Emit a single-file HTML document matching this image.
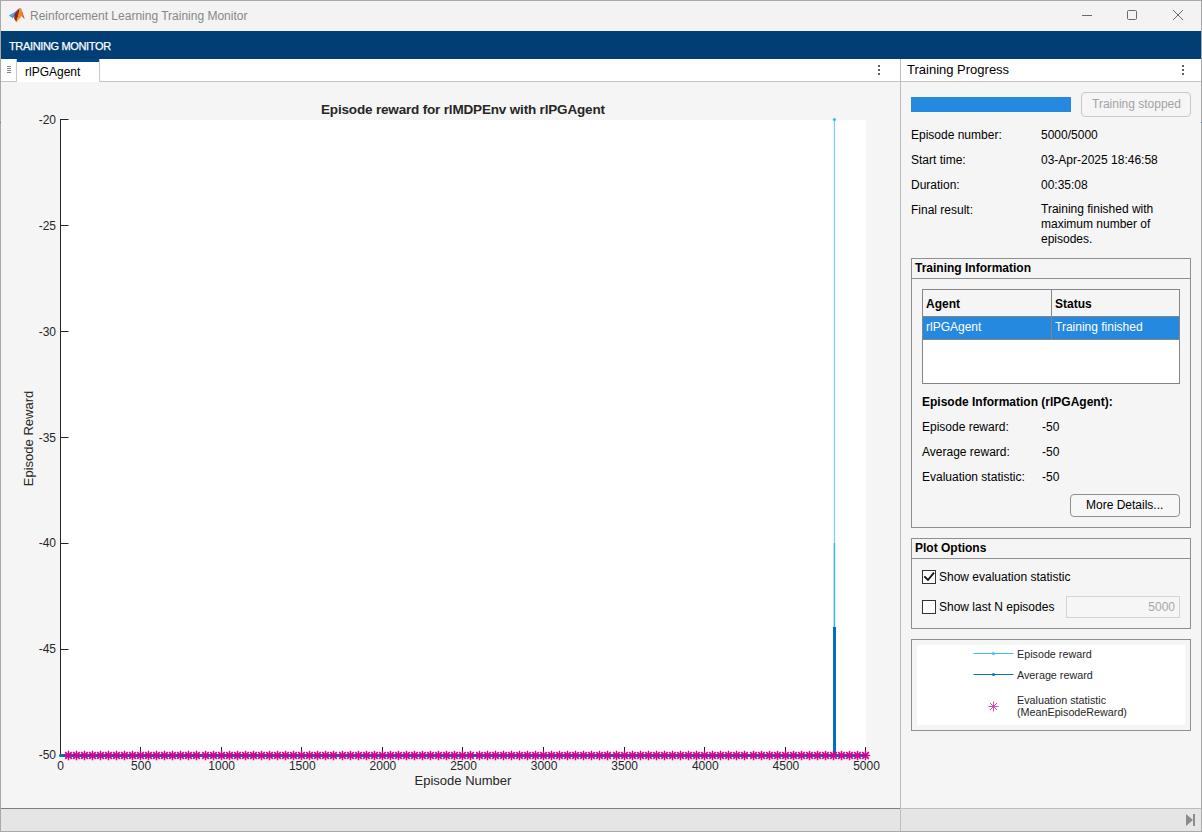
<!DOCTYPE html>
<html><head><meta charset="utf-8">
<style>
*{margin:0;padding:0;box-sizing:border-box}
html,body{width:1202px;height:832px;overflow:hidden;background:#f3f3f3;font-family:"Liberation Sans",sans-serif;color:#000}
.a{position:absolute}
#win{position:absolute;left:0;top:0;width:1202px;height:832px;border:1px solid #a8a8a8;background:#f3f3f3}
.t12{font-size:12px;line-height:14px;white-space:nowrap}
</style></head><body>
<div id="win"></div>
<div class="a" style="left:0;top:122px;width:1px;height:1px;background:#3d7cc4"></div>
<div class="a" style="left:1201px;top:122px;width:1px;height:1px;background:#3d7cc4"></div>
<!-- title bar -->
<div class="a" style="left:1px;top:1px;width:1200px;height:30px;background:#f3f3f3"></div>
<svg class="a" style="left:6px;top:4px" width="22" height="22" viewBox="0 0 22 22">
  <path d="M3 11.4 L8.5 8.3 L13.6 4 L12.2 8.6 L9.2 11.6 L6.8 14.2 Z" fill="#3b97e0"/>
  <path d="M3 11.4 L8.5 8.3 L9.5 9.5 L6 12.5 Z" fill="#52aaea"/>
  <path d="M8.3 10.2 L13.6 4 L12.6 11 L10.4 18.2 L8.2 14.6 Z" fill="#9c2614"/>
  <path d="M13.6 4 L15.2 4.6 L16.4 11.2 L10.4 18.2 L12.4 11 Z" fill="#ee8a26"/>
  <path d="M15.2 4.6 L18.8 15.2 L16.2 12.6 L16.4 11.2 Z" fill="#cf4418"/>
  <path d="M11.2 14.5 L14.5 13 L10.4 18.2 Z" fill="#f6b62c"/>
</svg>
<div class="a t12" style="left:30px;top:9px;color:#878787;font-size:12px">Reinforcement Learning Training Monitor</div>
<!-- window controls -->
<div class="a" style="left:1082px;top:15px;width:10px;height:1px;background:#6a6a6a"></div>
<div class="a" style="left:1127px;top:10px;width:10px;height:10px;border:1px solid #6a6a6a;border-radius:1.5px"></div>
<svg class="a" style="left:1173px;top:10px" width="10" height="10" viewBox="0 0 10 10"><path d="M0 0 L10 10 M10 0 L0 10" stroke="#6a6a6a" stroke-width="1"/></svg>
<!-- blue toolstrip -->
<div class="a" style="left:1px;top:31px;width:1200px;height:28px;background:#003e74"></div>
<div class="a" style="left:9px;top:40px;color:#fff;font-size:11px;line-height:13px;letter-spacing:-0.35px;-webkit-text-stroke:0.25px #fff;white-space:nowrap">TRAINING MONITOR</div>

<!-- left document tab strip -->
<div class="a" style="left:1px;top:59px;width:899px;height:23px;background:#fff;border-bottom:1px solid #c4c4c4"></div>
<div class="a" style="left:1px;top:59px;width:16px;height:23px;border-right:1px solid #c8c8c8;border-bottom:1px solid #c4c4c4;background:#fff"></div>
<div class="a" style="left:7px;top:66px;width:4px;height:1px;background:#777;box-shadow:0 2px 0 #888,0 4px 0 #888,0 6px 0 #888;background:#888"></div>
<div class="a" style="left:17px;top:59px;width:83px;height:23px;background:#fff;border-right:1px solid #c8c8c8"></div>
<div class="a" style="left:17px;top:59px;width:82px;height:3px;background:#02478a"></div>
<div class="a t12" style="left:25px;top:65px;color:#000">rlPGAgent</div>
<div class="a" style="left:878px;top:65px;width:2px;height:2px;background:#606060;box-shadow:0 4px 0 #606060,0 8px 0 #606060"></div>

<!-- left plot region -->
<div class="a" style="left:1px;top:82px;width:899px;height:726px;background:#f5f5f5"></div>
<svg class="a" style="left:0;top:0" width="900" height="808" id="plot">
<rect x="61" y="120" width="805" height="636" fill="#fff"/>
<path d="M60.5 119 V756 M60 755.5 H866" stroke="#262626" stroke-width="1" fill="none"/>
<path d="M61 119.5 H68.5 M61 225.5 H68.5 M61 331.5 H68.5 M61 437.5 H68.5 M61 543.5 H68.5 M61 649.5 H68.5 M140.5 755 V747 M221.5 755 V747 M301.5 755 V747 M382.5 755 V747 M462.5 755 V747 M543.5 755 V747 M624.5 755 V747 M704.5 755 V747 M785.5 755 V747 M865.5 755 V747" stroke="#262626" stroke-width="1" fill="none"/>
<text x="56" y="124.0" text-anchor="end" font-size="12" fill="#262626">-20</text>
<text x="56" y="230.0" text-anchor="end" font-size="12" fill="#262626">-25</text>
<text x="56" y="336.0" text-anchor="end" font-size="12" fill="#262626">-30</text>
<text x="56" y="442.0" text-anchor="end" font-size="12" fill="#262626">-35</text>
<text x="56" y="547.0" text-anchor="end" font-size="12" fill="#262626">-40</text>
<text x="56" y="653.0" text-anchor="end" font-size="12" fill="#262626">-45</text>
<text x="56" y="759.0" text-anchor="end" font-size="12" fill="#262626">-50</text>
<text x="60.5" y="770" text-anchor="middle" font-size="12" fill="#262626">0</text>
<text x="141.1" y="770" text-anchor="middle" font-size="12" fill="#262626">500</text>
<text x="221.7" y="770" text-anchor="middle" font-size="12" fill="#262626">1000</text>
<text x="302.3" y="770" text-anchor="middle" font-size="12" fill="#262626">1500</text>
<text x="382.9" y="770" text-anchor="middle" font-size="12" fill="#262626">2000</text>
<text x="463.5" y="770" text-anchor="middle" font-size="12" fill="#262626">2500</text>
<text x="544.1" y="770" text-anchor="middle" font-size="12" fill="#262626">3000</text>
<text x="624.7" y="770" text-anchor="middle" font-size="12" fill="#262626">3500</text>
<text x="705.3" y="770" text-anchor="middle" font-size="12" fill="#262626">4000</text>
<text x="785.9" y="770" text-anchor="middle" font-size="12" fill="#262626">4500</text>
<text x="866.5" y="770" text-anchor="middle" font-size="12" fill="#262626">5000</text>
<text x="463" y="785" text-anchor="middle" font-size="13" fill="#262626">Episode Number</text>
<text transform="translate(32.5 438.5) rotate(-90)" text-anchor="middle" font-size="13" fill="#262626">Episode Reward</text>
<text x="321" y="113.5" font-size="13.5" font-weight="bold" fill="#262626" textLength="284" lengthAdjust="spacing">Episode reward for rlMDPEnv with rlPGAgent</text>
<path d="M60.5 755.5 H866" stroke="#38bdf0" stroke-width="1.2" fill="none"/>
<path d="M834.4 543 V119.5" stroke="#38bdf0" stroke-opacity="0.75" stroke-width="1.1" fill="none"/>
<path d="M834.4 755.5 V543" stroke="#30b8ee" stroke-width="1.5" fill="none"/>
<circle cx="834.4" cy="119.5" r="1.6" fill="#38bdf0"/>
<path d="M60.5 755.5 H866" stroke="#0072bd" stroke-width="3" stroke-linecap="round" fill="none"/><path d="M834.5 755.5 V627" stroke="#0072bd" stroke-width="3" fill="none"/>
<path d="M64.56 755.5 H866" stroke="#d4008f" stroke-width="1" fill="none"/>
<path d="M68.50 750.80 V760.20 M63.80 755.50 H73.20 M76.50 750.80 V760.20 M71.80 755.50 H81.20 M84.50 750.80 V760.20 M79.80 755.50 H89.20 M92.50 750.80 V760.20 M87.80 755.50 H97.20 M100.50 750.80 V760.20 M95.80 755.50 H105.20 M108.50 750.80 V760.20 M103.80 755.50 H113.20 M116.50 750.80 V760.20 M111.80 755.50 H121.20 M124.50 750.80 V760.20 M119.80 755.50 H129.20 M132.50 750.80 V760.20 M127.80 755.50 H137.20 M140.50 750.80 V760.20 M135.80 755.50 H145.20 M148.50 750.80 V760.20 M143.80 755.50 H153.20 M156.50 750.80 V760.20 M151.80 755.50 H161.20 M164.50 750.80 V760.20 M159.80 755.50 H169.20 M172.50 750.80 V760.20 M167.80 755.50 H177.20 M180.50 750.80 V760.20 M175.80 755.50 H185.20 M188.50 750.80 V760.20 M183.80 755.50 H193.20 M196.50 750.80 V760.20 M191.80 755.50 H201.20 M205.50 750.80 V760.20 M200.80 755.50 H210.20 M213.50 750.80 V760.20 M208.80 755.50 H218.20 M221.50 750.80 V760.20 M216.80 755.50 H226.20 M229.50 750.80 V760.20 M224.80 755.50 H234.20 M237.50 750.80 V760.20 M232.80 755.50 H242.20 M245.50 750.80 V760.20 M240.80 755.50 H250.20 M253.50 750.80 V760.20 M248.80 755.50 H258.20 M261.50 750.80 V760.20 M256.80 755.50 H266.20 M269.50 750.80 V760.20 M264.80 755.50 H274.20 M277.50 750.80 V760.20 M272.80 755.50 H282.20 M285.50 750.80 V760.20 M280.80 755.50 H290.20 M293.50 750.80 V760.20 M288.80 755.50 H298.20 M301.50 750.80 V760.20 M296.80 755.50 H306.20 M309.50 750.80 V760.20 M304.80 755.50 H314.20 M317.50 750.80 V760.20 M312.80 755.50 H322.20 M325.50 750.80 V760.20 M320.80 755.50 H330.20 M333.50 750.80 V760.20 M328.80 755.50 H338.20 M342.50 750.80 V760.20 M337.80 755.50 H347.20 M350.50 750.80 V760.20 M345.80 755.50 H355.20 M358.50 750.80 V760.20 M353.80 755.50 H363.20 M366.50 750.80 V760.20 M361.80 755.50 H371.20 M374.50 750.80 V760.20 M369.80 755.50 H379.20 M382.50 750.80 V760.20 M377.80 755.50 H387.20 M390.50 750.80 V760.20 M385.80 755.50 H395.20 M398.50 750.80 V760.20 M393.80 755.50 H403.20 M406.50 750.80 V760.20 M401.80 755.50 H411.20 M414.50 750.80 V760.20 M409.80 755.50 H419.20 M422.50 750.80 V760.20 M417.80 755.50 H427.20 M430.50 750.80 V760.20 M425.80 755.50 H435.20 M438.50 750.80 V760.20 M433.80 755.50 H443.20 M446.50 750.80 V760.20 M441.80 755.50 H451.20 M454.50 750.80 V760.20 M449.80 755.50 H459.20 M462.50 750.80 V760.20 M457.80 755.50 H467.20 M470.50 750.80 V760.20 M465.80 755.50 H475.20 M479.50 750.80 V760.20 M474.80 755.50 H484.20 M487.50 750.80 V760.20 M482.80 755.50 H492.20 M495.50 750.80 V760.20 M490.80 755.50 H500.20 M503.50 750.80 V760.20 M498.80 755.50 H508.20 M511.50 750.80 V760.20 M506.80 755.50 H516.20 M519.50 750.80 V760.20 M514.80 755.50 H524.20 M527.50 750.80 V760.20 M522.80 755.50 H532.20 M535.50 750.80 V760.20 M530.80 755.50 H540.20 M543.50 750.80 V760.20 M538.80 755.50 H548.20 M551.50 750.80 V760.20 M546.80 755.50 H556.20 M559.50 750.80 V760.20 M554.80 755.50 H564.20 M567.50 750.80 V760.20 M562.80 755.50 H572.20 M575.50 750.80 V760.20 M570.80 755.50 H580.20 M583.50 750.80 V760.20 M578.80 755.50 H588.20 M591.50 750.80 V760.20 M586.80 755.50 H596.20 M599.50 750.80 V760.20 M594.80 755.50 H604.20 M607.50 750.80 V760.20 M602.80 755.50 H612.20 M616.50 750.80 V760.20 M611.80 755.50 H621.20 M624.50 750.80 V760.20 M619.80 755.50 H629.20 M632.50 750.80 V760.20 M627.80 755.50 H637.20 M640.50 750.80 V760.20 M635.80 755.50 H645.20 M648.50 750.80 V760.20 M643.80 755.50 H653.20 M656.50 750.80 V760.20 M651.80 755.50 H661.20 M664.50 750.80 V760.20 M659.80 755.50 H669.20 M672.50 750.80 V760.20 M667.80 755.50 H677.20 M680.50 750.80 V760.20 M675.80 755.50 H685.20 M688.50 750.80 V760.20 M683.80 755.50 H693.20 M696.50 750.80 V760.20 M691.80 755.50 H701.20 M704.50 750.80 V760.20 M699.80 755.50 H709.20 M712.50 750.80 V760.20 M707.80 755.50 H717.20 M720.50 750.80 V760.20 M715.80 755.50 H725.20 M728.50 750.80 V760.20 M723.80 755.50 H733.20 M736.50 750.80 V760.20 M731.80 755.50 H741.20 M744.50 750.80 V760.20 M739.80 755.50 H749.20 M753.50 750.80 V760.20 M748.80 755.50 H758.20 M761.50 750.80 V760.20 M756.80 755.50 H766.20 M769.50 750.80 V760.20 M764.80 755.50 H774.20 M777.50 750.80 V760.20 M772.80 755.50 H782.20 M785.50 750.80 V760.20 M780.80 755.50 H790.20 M793.50 750.80 V760.20 M788.80 755.50 H798.20 M801.50 750.80 V760.20 M796.80 755.50 H806.20 M809.50 750.80 V760.20 M804.80 755.50 H814.20 M817.50 750.80 V760.20 M812.80 755.50 H822.20 M825.50 750.80 V760.20 M820.80 755.50 H830.20 M833.50 750.80 V760.20 M828.80 755.50 H838.20 M841.50 750.80 V760.20 M836.80 755.50 H846.20 M849.50 750.80 V760.20 M844.80 755.50 H854.20 M857.50 750.80 V760.20 M852.80 755.50 H862.20 M865.50 750.80 V760.20 M860.80 755.50 H870.20" stroke="#d4008f" stroke-width="1.5" fill="none"/>
<path d="M65.20 752.20 L71.80 758.80 M65.20 758.80 L71.80 752.20 M73.20 752.20 L79.80 758.80 M73.20 758.80 L79.80 752.20 M81.20 752.20 L87.80 758.80 M81.20 758.80 L87.80 752.20 M89.20 752.20 L95.80 758.80 M89.20 758.80 L95.80 752.20 M97.20 752.20 L103.80 758.80 M97.20 758.80 L103.80 752.20 M105.20 752.20 L111.80 758.80 M105.20 758.80 L111.80 752.20 M113.20 752.20 L119.80 758.80 M113.20 758.80 L119.80 752.20 M121.20 752.20 L127.80 758.80 M121.20 758.80 L127.80 752.20 M129.20 752.20 L135.80 758.80 M129.20 758.80 L135.80 752.20 M137.20 752.20 L143.80 758.80 M137.20 758.80 L143.80 752.20 M145.20 752.20 L151.80 758.80 M145.20 758.80 L151.80 752.20 M153.20 752.20 L159.80 758.80 M153.20 758.80 L159.80 752.20 M161.20 752.20 L167.80 758.80 M161.20 758.80 L167.80 752.20 M169.20 752.20 L175.80 758.80 M169.20 758.80 L175.80 752.20 M177.20 752.20 L183.80 758.80 M177.20 758.80 L183.80 752.20 M185.20 752.20 L191.80 758.80 M185.20 758.80 L191.80 752.20 M193.20 752.20 L199.80 758.80 M193.20 758.80 L199.80 752.20 M202.20 752.20 L208.80 758.80 M202.20 758.80 L208.80 752.20 M210.20 752.20 L216.80 758.80 M210.20 758.80 L216.80 752.20 M218.20 752.20 L224.80 758.80 M218.20 758.80 L224.80 752.20 M226.20 752.20 L232.80 758.80 M226.20 758.80 L232.80 752.20 M234.20 752.20 L240.80 758.80 M234.20 758.80 L240.80 752.20 M242.20 752.20 L248.80 758.80 M242.20 758.80 L248.80 752.20 M250.20 752.20 L256.80 758.80 M250.20 758.80 L256.80 752.20 M258.20 752.20 L264.80 758.80 M258.20 758.80 L264.80 752.20 M266.20 752.20 L272.80 758.80 M266.20 758.80 L272.80 752.20 M274.20 752.20 L280.80 758.80 M274.20 758.80 L280.80 752.20 M282.20 752.20 L288.80 758.80 M282.20 758.80 L288.80 752.20 M290.20 752.20 L296.80 758.80 M290.20 758.80 L296.80 752.20 M298.20 752.20 L304.80 758.80 M298.20 758.80 L304.80 752.20 M306.20 752.20 L312.80 758.80 M306.20 758.80 L312.80 752.20 M314.20 752.20 L320.80 758.80 M314.20 758.80 L320.80 752.20 M322.20 752.20 L328.80 758.80 M322.20 758.80 L328.80 752.20 M330.20 752.20 L336.80 758.80 M330.20 758.80 L336.80 752.20 M339.20 752.20 L345.80 758.80 M339.20 758.80 L345.80 752.20 M347.20 752.20 L353.80 758.80 M347.20 758.80 L353.80 752.20 M355.20 752.20 L361.80 758.80 M355.20 758.80 L361.80 752.20 M363.20 752.20 L369.80 758.80 M363.20 758.80 L369.80 752.20 M371.20 752.20 L377.80 758.80 M371.20 758.80 L377.80 752.20 M379.20 752.20 L385.80 758.80 M379.20 758.80 L385.80 752.20 M387.20 752.20 L393.80 758.80 M387.20 758.80 L393.80 752.20 M395.20 752.20 L401.80 758.80 M395.20 758.80 L401.80 752.20 M403.20 752.20 L409.80 758.80 M403.20 758.80 L409.80 752.20 M411.20 752.20 L417.80 758.80 M411.20 758.80 L417.80 752.20 M419.20 752.20 L425.80 758.80 M419.20 758.80 L425.80 752.20 M427.20 752.20 L433.80 758.80 M427.20 758.80 L433.80 752.20 M435.20 752.20 L441.80 758.80 M435.20 758.80 L441.80 752.20 M443.20 752.20 L449.80 758.80 M443.20 758.80 L449.80 752.20 M451.20 752.20 L457.80 758.80 M451.20 758.80 L457.80 752.20 M459.20 752.20 L465.80 758.80 M459.20 758.80 L465.80 752.20 M467.20 752.20 L473.80 758.80 M467.20 758.80 L473.80 752.20 M476.20 752.20 L482.80 758.80 M476.20 758.80 L482.80 752.20 M484.20 752.20 L490.80 758.80 M484.20 758.80 L490.80 752.20 M492.20 752.20 L498.80 758.80 M492.20 758.80 L498.80 752.20 M500.20 752.20 L506.80 758.80 M500.20 758.80 L506.80 752.20 M508.20 752.20 L514.80 758.80 M508.20 758.80 L514.80 752.20 M516.20 752.20 L522.80 758.80 M516.20 758.80 L522.80 752.20 M524.20 752.20 L530.80 758.80 M524.20 758.80 L530.80 752.20 M532.20 752.20 L538.80 758.80 M532.20 758.80 L538.80 752.20 M540.20 752.20 L546.80 758.80 M540.20 758.80 L546.80 752.20 M548.20 752.20 L554.80 758.80 M548.20 758.80 L554.80 752.20 M556.20 752.20 L562.80 758.80 M556.20 758.80 L562.80 752.20 M564.20 752.20 L570.80 758.80 M564.20 758.80 L570.80 752.20 M572.20 752.20 L578.80 758.80 M572.20 758.80 L578.80 752.20 M580.20 752.20 L586.80 758.80 M580.20 758.80 L586.80 752.20 M588.20 752.20 L594.80 758.80 M588.20 758.80 L594.80 752.20 M596.20 752.20 L602.80 758.80 M596.20 758.80 L602.80 752.20 M604.20 752.20 L610.80 758.80 M604.20 758.80 L610.80 752.20 M613.20 752.20 L619.80 758.80 M613.20 758.80 L619.80 752.20 M621.20 752.20 L627.80 758.80 M621.20 758.80 L627.80 752.20 M629.20 752.20 L635.80 758.80 M629.20 758.80 L635.80 752.20 M637.20 752.20 L643.80 758.80 M637.20 758.80 L643.80 752.20 M645.20 752.20 L651.80 758.80 M645.20 758.80 L651.80 752.20 M653.20 752.20 L659.80 758.80 M653.20 758.80 L659.80 752.20 M661.20 752.20 L667.80 758.80 M661.20 758.80 L667.80 752.20 M669.20 752.20 L675.80 758.80 M669.20 758.80 L675.80 752.20 M677.20 752.20 L683.80 758.80 M677.20 758.80 L683.80 752.20 M685.20 752.20 L691.80 758.80 M685.20 758.80 L691.80 752.20 M693.20 752.20 L699.80 758.80 M693.20 758.80 L699.80 752.20 M701.20 752.20 L707.80 758.80 M701.20 758.80 L707.80 752.20 M709.20 752.20 L715.80 758.80 M709.20 758.80 L715.80 752.20 M717.20 752.20 L723.80 758.80 M717.20 758.80 L723.80 752.20 M725.20 752.20 L731.80 758.80 M725.20 758.80 L731.80 752.20 M733.20 752.20 L739.80 758.80 M733.20 758.80 L739.80 752.20 M741.20 752.20 L747.80 758.80 M741.20 758.80 L747.80 752.20 M750.20 752.20 L756.80 758.80 M750.20 758.80 L756.80 752.20 M758.20 752.20 L764.80 758.80 M758.20 758.80 L764.80 752.20 M766.20 752.20 L772.80 758.80 M766.20 758.80 L772.80 752.20 M774.20 752.20 L780.80 758.80 M774.20 758.80 L780.80 752.20 M782.20 752.20 L788.80 758.80 M782.20 758.80 L788.80 752.20 M790.20 752.20 L796.80 758.80 M790.20 758.80 L796.80 752.20 M798.20 752.20 L804.80 758.80 M798.20 758.80 L804.80 752.20 M806.20 752.20 L812.80 758.80 M806.20 758.80 L812.80 752.20 M814.20 752.20 L820.80 758.80 M814.20 758.80 L820.80 752.20 M822.20 752.20 L828.80 758.80 M822.20 758.80 L828.80 752.20 M830.20 752.20 L836.80 758.80 M830.20 758.80 L836.80 752.20 M838.20 752.20 L844.80 758.80 M838.20 758.80 L844.80 752.20 M846.20 752.20 L852.80 758.80 M846.20 758.80 L852.80 752.20 M854.20 752.20 L860.80 758.80 M854.20 758.80 L860.80 752.20 M862.20 752.20 L868.80 758.80 M862.20 758.80 L868.80 752.20" stroke="#d4008f" stroke-width="1.7" fill="none"/>
</svg>

<!-- divider -->
<div class="a" style="left:900px;top:59px;width:1px;height:772px;background:#bdbdbd"></div>

<!-- right panel header -->
<div class="a" style="left:901px;top:59px;width:300px;height:23px;background:#fff;border-bottom:1px solid #c4c4c4"></div>
<div class="a" style="left:907px;top:62px;font-size:13px;line-height:15px;white-space:nowrap">Training Progress</div>
<div class="a" style="left:1182px;top:65px;width:2px;height:2px;background:#606060;box-shadow:0 4px 0 #606060,0 8px 0 #606060"></div>
<div class="a" style="left:901px;top:82px;width:300px;height:726px;background:#f5f5f5"></div>


<!-- training progress content -->
<div class="a" style="left:911px;top:97px;width:160px;height:15px;background:#2589e0"></div>
<div class="a" style="left:1081px;top:92px;width:110px;height:25px;border:1px solid #c9c9c9;border-radius:4px;background:#f5f5f5"></div>
<div class="a t12" style="left:1092px;top:97px;color:#a3a3a3">Training stopped</div>
<div class="a t12" style="left:911px;top:128px">Episode number:</div>
<div class="a t12" style="left:1041px;top:128px">5000/5000</div>
<div class="a t12" style="left:911px;top:153px">Start time:</div>
<div class="a t12" style="left:1041px;top:153px">03-Apr-2025 18:46:58</div>
<div class="a t12" style="left:911px;top:178px">Duration:</div>
<div class="a t12" style="left:1041px;top:178px">00:35:08</div>
<div class="a t12" style="left:911px;top:203px">Final result:</div>
<div class="a" style="left:1041px;top:202px;font-size:12px;line-height:14.9px;width:150px">Training finished with maximum number of episodes.</div>

<!-- training information panel -->
<div class="a" style="left:911px;top:258px;width:280px;height:270px;border:1px solid #8f8f8f"></div>
<div class="a" style="left:912px;top:278px;width:278px;height:1px;background:#8f8f8f"></div>
<div class="a t12" style="left:915px;top:261px;font-weight:bold">Training Information</div>
<div class="a" style="left:922px;top:289px;width:258px;height:95px;border:1px solid #858585;background:#fff"></div>
<div class="a" style="left:923px;top:290px;width:256px;height:27px;background:#f5f5f5;border-bottom:1px solid #858585"></div>
<div class="a" style="left:923px;top:317px;width:256px;height:22px;background:#2589e0"></div>
<div class="a" style="left:923px;top:339px;width:256px;height:1px;background:#858585"></div>
<div class="a" style="left:1051px;top:290px;width:1px;height:49px;background:#858585"></div>
<div class="a t12" style="left:926px;top:297px;font-weight:bold">Agent</div>
<div class="a t12" style="left:1055px;top:297px;font-weight:bold">Status</div>
<div class="a t12" style="left:926px;top:320px;color:#fff">rlPGAgent</div>
<div class="a t12" style="left:1055px;top:320px;color:#fff">Training finished</div>
<div class="a t12" style="left:922px;top:395px;font-weight:bold">Episode Information (rlPGAgent):</div>
<div class="a t12" style="left:922px;top:420px">Episode reward:</div>
<div class="a t12" style="left:1042px;top:420px">-50</div>
<div class="a t12" style="left:922px;top:445px">Average reward:</div>
<div class="a t12" style="left:1042px;top:445px">-50</div>
<div class="a t12" style="left:922px;top:470px">Evaluation statistic:</div>
<div class="a t12" style="left:1042px;top:470px">-50</div>
<div class="a" style="left:1070px;top:494px;width:110px;height:23px;border:1px solid #8f8f8f;border-radius:4px;background:#f7f7f7"></div>
<div class="a t12" style="left:1086px;top:498px">More Details...</div>

<!-- plot options panel -->
<div class="a" style="left:911px;top:538px;width:280px;height:91px;border:1px solid #8f8f8f"></div>
<div class="a" style="left:912px;top:558px;width:278px;height:1px;background:#8f8f8f"></div>
<div class="a t12" style="left:915px;top:541px;font-weight:bold">Plot Options</div>
<div class="a" style="left:922px;top:570px;width:14px;height:14px;border:1px solid #333;background:#fff"></div>
<svg class="a" style="left:922px;top:570px" width="14" height="14" viewBox="0 0 14 14"><path d="M2.3 6.3 L6 10 L12 2.6" stroke="#111" stroke-width="1.8" fill="none"/></svg>
<div class="a t12" style="left:939px;top:570px">Show evaluation statistic</div>
<div class="a" style="left:922px;top:600px;width:14px;height:14px;border:1px solid #333;background:#fff"></div>
<div class="a t12" style="left:939px;top:600px">Show last N episodes</div>
<div class="a" style="left:1066px;top:596px;width:114px;height:22px;border:1px solid #d4d4d4;background:#f6f6f6"></div>
<div class="a t12" style="left:1066px;top:600px;width:109px;text-align:right;color:#a6a6a6">5000</div>

<!-- legend panel -->
<div class="a" style="left:911px;top:639px;width:280px;height:92px;border:1px solid #8f8f8f"></div>
<div class="a" style="left:917px;top:645px;width:268px;height:80px;background:#fff"></div>
<svg class="a" style="left:917px;top:645px" width="268" height="80">
  <path d="M56.5 8.5 H96.5" stroke="#3dbdf0" stroke-width="1"/><circle cx="76.5" cy="8.5" r="1.5" fill="#3dbdf0"/>
  <path d="M56.5 29.5 H96.5" stroke="#0b72c2" stroke-width="1"/><circle cx="76.5" cy="29.5" r="1.5" fill="#0b72c2"/>
  <path d="M76.5 56.5 V66.5 M71.5 61.5 H81.5 M73 58 L80 65 M73 65 L80 58" stroke="#d63ca8" stroke-width="0.9"/>
</svg>
<div class="a" style="left:1017px;top:648px;font-size:10.75px;line-height:13px;white-space:nowrap;color:#262626">Episode reward</div>
<div class="a" style="left:1017px;top:669px;font-size:10.75px;line-height:13px;white-space:nowrap;color:#262626">Average reward</div>
<div class="a" style="left:1017px;top:694px;font-size:10.75px;line-height:12px;white-space:nowrap;color:#262626">Evaluation statistic<br>(MeanEpisodeReward)</div>

<!-- status bar -->
<div class="a" style="left:1px;top:808px;width:1200px;height:23px;background:#e5e5e5;border-top:1px solid #bcbcbc"></div>
<div class="a" style="left:900px;top:808px;width:1px;height:23px;background:#bdbdbd"></div>
<div class="a" style="left:1px;top:808px;width:899px;height:1px;background:#7f7f7f"></div>
<svg class="a" style="left:1185px;top:813px" width="12" height="14" viewBox="0 0 12 14"><path d="M1 1 L8 7 L1 13 Z" fill="#8c8c8c"/><rect x="8" y="1" width="2" height="12" fill="#8c8c8c"/></svg>
</body></html>
